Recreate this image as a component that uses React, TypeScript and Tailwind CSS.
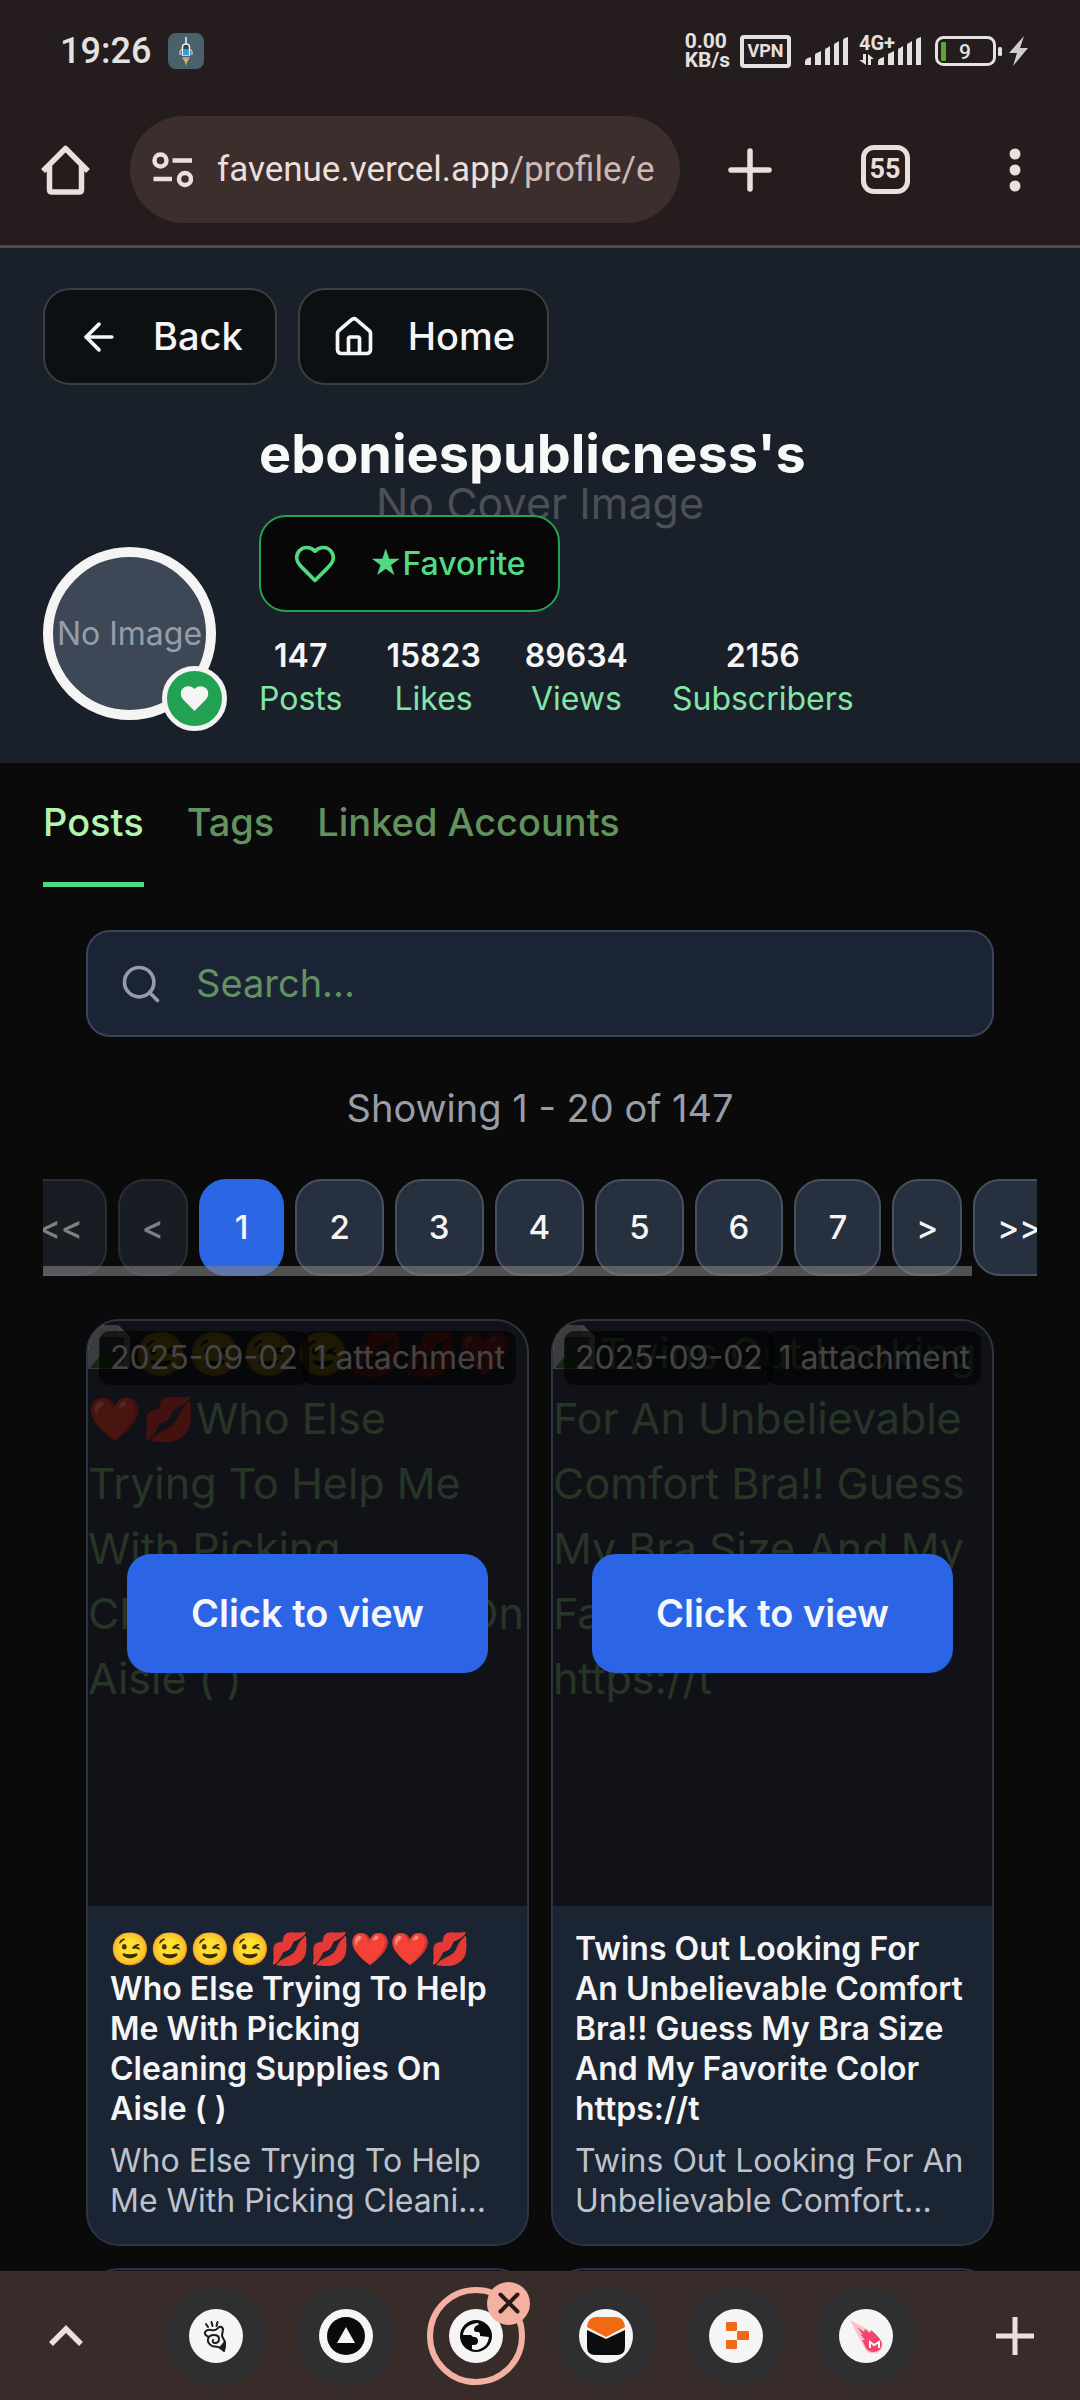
import React from "react";
import { ArrowLeft, House, Search } from "lucide-react";

const HEART =
  "M19 14c1.49-1.46 3-3.21 3-5.5A5.5 5.5 0 0 0 16.5 3c-1.76 0-3 .5-4.5 2-1.5-1.5-2.74-2-4.5-2A5.5 5.5 0 0 0 2 8.5c0 2.3 1.5 4.05 3 5.5l7 7Z";

function SignalBars() {
  return (
    <svg width="44" height="28" viewBox="0 0 44 28" fill="#e4e1e1" aria-hidden="true">
      <path d="M0 28v-3q0-3 3-4l3-1v8zM10 28V18q0-2 2-2l4-2v14zM20 28V13q0-2 2-2l3-2v19zM29 28V8q0-2 2-2l3-2v24zM38 28V3q0-1 2-2l3-1v28z" />
    </svg>
  );
}

function StatusBar() {
  return (
    <div className="flex h-[102px] items-center justify-between pl-[60px] pr-[52px] text-[#e4e1e1]">
      <div className="flex items-center gap-[17px]">
        <span className="text-[36px] font-medium leading-none">19:26</span>
        <svg width="36" height="36" viewBox="0 0 36 36" aria-hidden="true">
          <rect width="36" height="36" rx="8" fill="#4a616b" />
          <path d="M18 4v7" stroke="#f0f0f0" strokeWidth="1.5" />
          <path d="M14.5 22v-8q0-3 3.500-3t3.500 3v8z" fill="#3a4146" stroke="#f0f0f0" strokeWidth="1.500" />
          <path d="M15 16h6v6h-6z" fill="#2f9fe8" />
          <path d="M14 16l-2 2v4M22 16l2 2v4M14.500 25h7" stroke="#e8e8e8" fill="none" />
          <path d="M15 26h6l-2 3-1 4-1-4z" fill="#e8b33a" />
        </svg>
      </div>
      <div className="flex items-center">
        <div className="mr-[10px] text-[21px] font-bold leading-[19px]">
          <div>0.00</div>
          <div>KB/s</div>
        </div>
        <div className="mr-[14px] flex h-[33px] w-[51px] items-center justify-center rounded-[4px] border-4 border-[#e4e1e1] text-[18px] font-bold leading-none">
          VPN
        </div>
        <SignalBars />
        <div className="relative ml-[10px] flex items-end gap-[3px]">
          <span className="absolute -top-[4px] left-0 text-[20px] font-bold leading-[20px]">4G+</span>
          <svg width="16" height="11" viewBox="0 0 16 11" fill="#e4e1e1" aria-hidden="true">
            <path d="M4 0h3v11L0 6h4zM9 0l6 5h-3v6H9z" />
          </svg>
          <SignalBars />
        </div>
        <svg className="ml-[13px]" width="68" height="31" viewBox="0 0 68 31" aria-hidden="true">
          <rect x="1.500" y="1.500" width="58" height="27" rx="7" fill="none" stroke="#e4e1e1" strokeWidth="3" />
          <rect x="6" y="6" width="5" height="19" rx="1" fill="#57a82c" />
          <rect x="63" y="11" width="4" height="9" rx="1.500" fill="#e4e1e1" />
          <text x="30" y="23" textAnchor="middle" fill="#e4e1e1" fontSize="21" fontWeight="500">
            9
          </text>
        </svg>
        <svg className="ml-[6px]" width="19" height="30" viewBox="0 0 19 30" fill="#cfcccc" aria-hidden="true">
          <path d="M15 0 0 17h8L4 30 19 12h-8z" />
        </svg>
      </div>
    </div>
  );
}

function Toolbar() {
  return (
    <div className="flex items-center pb-[22px] pl-[41px] pt-[14px] text-[#ecdedb]">
      <button aria-label="Home page" className="mr-[40px] flex w-[49px] justify-center">
        <svg width="49" height="50" viewBox="0 0 49 50" fill="none" stroke="currentColor" strokeWidth="5.500" strokeLinejoin="round" aria-hidden="true">
          <path d="M2 26 24.500 3.500 47 26M8.500 21v23.500q0 2.500 2.500 2.500h27q2.500 0 2.500-2.500V21" />
        </svg>
      </button>
      <button aria-label="Address bar" className="flex h-[107px] min-w-0 flex-1 items-center rounded-full bg-[#3b2e2c] pl-[22px] pr-[24px] text-left">
        <svg className="mr-[24px] shrink-0" width="41" height="36" viewBox="0 0 41 36" fill="none" stroke="currentColor" strokeWidth="4.500" aria-hidden="true">
          <circle cx="8.500" cy="8.500" r="6" />
          <path d="M20.500 8.500H40M1.500 27H20" />
          <circle cx="33" cy="27" r="6" />
        </svg>
        <span className="overflow-hidden whitespace-nowrap text-[35px] leading-[50px]">
          favenue.vercel.app<span className="text-[#cdbab7]">/profile/e</span>
        </span>
      </button>
      <button aria-label="New tab" className="flex w-[140px] justify-center">
        <svg width="44" height="44" viewBox="0 0 44 44" stroke="currentColor" strokeWidth="5.500" strokeLinecap="round" aria-hidden="true">
          <path d="M22 3v38M3 22h38" />
        </svg>
      </button>
      <button aria-label="55 open tabs" className="flex w-[130px] justify-center">
        <span className="flex size-[49px] items-center justify-center rounded-[13px] border-[5px] border-[#ecdedb] text-[27px] font-bold leading-none">
          55
        </span>
      </button>
      <button aria-label="Menu" className="flex w-[130px] justify-center">
        <svg width="12" height="44" viewBox="0 0 12 44" fill="currentColor" aria-hidden="true">
          <circle cx="6" cy="6" r="5.500" />
          <circle cx="6" cy="22" r="5.500" />
          <circle cx="6" cy="38" r="5.500" />
        </svg>
      </button>
    </div>
  );
}

const stats = [
  ["147", "Posts"],
  ["15823", "Likes"],
  ["89634", "Views"],
  ["2156", "Subscribers"],
];

function ProfileHeader() {
  return (
    <section className="relative bg-[#1a2029] px-[43px] pb-[43px] pt-[40px]">
      <div className="absolute inset-0 flex items-center justify-center pb-[4px] text-[43px] text-[#4b4f56]">No Cover Image</div>
      <div className="relative flex gap-[21px]">
        <a href="#back" className="flex h-[97px] items-center gap-[32px] rounded-[27px] border-2 border-[#3b3e43] bg-[#0d1013] px-[32px] text-[38px] font-medium text-[#f5f5f5]">
          <ArrowLeft size={44} aria-hidden="true" />
          Back
        </a>
        <a href="#home" className="flex h-[97px] items-center gap-[32px] rounded-[27px] border-2 border-[#3b3e43] bg-[#0d1013] px-[32px] text-[38px] font-medium text-[#f5f5f5]">
          <House size={44} aria-hidden="true" />
          Home
        </a>
      </div>
      <div className="relative mt-[35px] flex items-end gap-[43px]">
        <div className="relative size-[173px] shrink-0">
          <div className="flex size-full items-center justify-center whitespace-nowrap rounded-full border-[10px] border-[#f4f4f4] bg-[#3d4756] text-[32px] text-[#969daa]">
            No Image
          </div>
          <span className="absolute -bottom-[11px] -right-[11px] flex size-[65px] items-center justify-center rounded-full border-[5px] border-[#f4f4f4] bg-[#22a152]">
            <svg width="33" height="33" viewBox="0 0 24 24" fill="#f4f4f4" aria-hidden="true">
              <path d={HEART} />
            </svg>
          </span>
        </div>
        <div>
          <h1 className="text-[54px] font-bold leading-[68px] text-[#f8f8f8]">eboniespublicness's</h1>
          <button className="mt-[27px] flex h-[97px] items-center gap-[32px] rounded-[27px] border-2 border-[#24a153] bg-[#070707] px-[32px] text-[32px] font-medium text-[#52da83]">
            <svg width="44" height="44" viewBox="0 0 24 24" fill="none" stroke="currentColor" strokeWidth="2" strokeLinecap="round" strokeLinejoin="round" aria-hidden="true">
              <path d={HEART} />
            </svg>
            <span>★Favorite</span>
          </button>
          <dl className="mt-[22px] flex gap-[44px] text-center text-[32px] leading-[43px]">
            {stats.map(([value, label]) => (
              <div key={label} className="flex flex-col-reverse">
                <dt className="text-[#83e6a7]">{label}</dt>
                <dd className="font-semibold text-[#f5f5f5]">{value}</dd>
              </div>
            ))}
          </dl>
        </div>
      </div>
    </section>
  );
}

function Pagination() {
  const arrow =
    "h-[97px] shrink-0 rounded-[27px] border-2 border-[#475160] bg-[#26303e] px-[22px]";
  const page =
    "h-[97px] shrink-0 rounded-[27px] border-2 border-[#475160] bg-[#26303e] px-[32px]";
  return (
    <nav aria-label="Pagination" className="relative mt-[44px] overflow-hidden">
      <div className="flex justify-center gap-[11px] text-[33px] font-medium text-[#f5f5f5]">
        <button disabled aria-label="First page" className={arrow + " opacity-50"}>{"<<"}</button>
        <button disabled aria-label="Previous page" className={arrow + " opacity-50"}>{"<"}</button>
        <button aria-current="page" className="h-[97px] shrink-0 rounded-[27px] bg-[#2b66e5] px-[36px]">1</button>
        {[2, 3, 4, 5, 6, 7].map((n) => (
          <button key={n} className={page}>{n}</button>
        ))}
        <button aria-label="Next page" className={arrow}>{">"}</button>
        <button aria-label="Last page" className={arrow}>{">>"}</button>
      </div>
      <div className="absolute bottom-0 left-0 right-[65px] h-[10px] bg-[#808080]/60" />
    </nav>
  );
}

function BrokenImage() {
  return (
    <svg className="mr-[2px] inline-block align-baseline" width="44" height="44" viewBox="0 0 44 44" aria-hidden="true">
      <path d="M0 0h30l12 12v32H0z" fill="#c5c9cf" />
      <path d="M12 12h24v26H12z" fill="#5b6370" />
      <path d="M2 43l14-17 10 8v9z" fill="#3e8a3e" />
      <path d="M30 0v12h12z" fill="#e5e7ea" />
    </svg>
  );
}

type Post = { title: string; alt: string; summary: string };

const posts: Post[] = [
  {
    title: "😉😉😉😉💋💋❤️❤️💋 Who Else Trying To Help Me With Picking Cleaning Supplies On Aisle ( )",
    alt: "😉😉😉😉💋💋❤️❤️💋Who Else\nTrying To Help Me With Picking Cleaning Supplies On Aisle ( )",
    summary: "Who Else Trying To Help Me With Picking Cleani...",
  },
  {
    title: "Twins Out Looking For An Unbelievable Comfort Bra!! Guess My Bra Size And My Favorite Color https://t",
    alt: "Twins Out Looking For An Unbelievable Comfort Bra!! Guess My Bra Size And My Favorite Color https://t",
    summary: "Twins Out Looking For An Unbelievable Comfort...",
  },
];

function PostCard({ post }: { post: Post }) {
  return (
    <article className="overflow-hidden rounded-[33px] border-2 border-[#2a3442] bg-[#1b2433]">
      <div className="relative aspect-[3/4] overflow-hidden bg-[#363f4d]">
        <p className="whitespace-pre-line text-[43px] leading-[65px] text-[#83b183]">
          <BrokenImage />
          {post.alt}
        </p>
        <div className="absolute inset-x-[11px] top-[10px] flex justify-between whitespace-nowrap text-[32px] leading-[44px] text-[#e4e4e4]">
          <span className="-mr-[12px] rounded-[11px] bg-black/60 px-[11px] py-[5px]">2025-09-02</span>
          <span className="rounded-[11px] bg-black/60 px-[11px] py-[5px]">1 attachment</span>
        </div>
        <div className="absolute inset-0 flex items-center justify-center bg-black/70">
          <button className="h-[119px] rounded-[24px] bg-[#2b65e5] px-[64px] text-[38px] font-semibold text-[#f3f6fd]">
            Click to view
          </button>
        </div>
      </div>
      <div className="px-[22px] py-[23px] text-[32px] leading-[40px]">
        <h2 className="font-semibold text-[#f5f5f6]">{post.title}</h2>
        <p className="mt-[12px] text-[#bec3cb]">{post.summary}</p>
      </div>
    </article>
  );
}

const tabIcons: { name: string; icon: React.ReactNode }[] = [
  {
    name: "Hand site",
    icon: (
      <g fill="none" stroke="#1c1c1c" strokeWidth="2" strokeLinecap="round" strokeLinejoin="round">
        <path d="M17 15l2 3M22.500 13l1 4M28.500 13l-1 4" />
        <path d="M20 28q-5-2-4-5 2-3 6-2 5 1 8-3 3-1 4 2l-1 7 3 6-1 8q-3-3-6-3l-6-1q-5-3-4-7 1-4 6-4 5 0 5 4 0 4-4 4-3 0-2-3" />
        <path d="M31 39l5-6v4l-1 5z" fill="#1c1c1c" />
      </g>
    ),
  },
  {
    name: "Triangle site",
    icon: (
      <g>
        <circle cx="27" cy="27" r="19" fill="#0a0a0a" />
        <path d="M27 18l9 16H18z" fill="#f5f5f5" />
      </g>
    ),
  },
  {
    name: "Current page",
    icon: (
      <g>
        <circle cx="27" cy="27" r="16" fill="#0a0a0a" />
        <path d="M14 26q1-10 14-12 3 0 1 2-4 1-4 5 0 2 4 2 2 0 2 2v2l9 1q-1 9-9 12-4 2-8 0v-4h2q4 0 4-4t-4-4q-2 0-3-2z" fill="#f5f5f5" />
      </g>
    ),
  },
  {
    name: "Envelope site",
    icon: (
      <g>
        <path d="M8 18q1-10 9-10h20q8 0 9 10L27 28z" fill="#f06a14" />
        <path d="M8 21l19 9 19-9v17q0 8-8 8H16q-8 0-8-8z" fill="#0d0d0d" />
      </g>
    ),
  },
  {
    name: "Blocks site",
    icon: (
      <g fill="#ee6a19">
        <rect x="17" y="13" width="11" height="9" rx="1" />
        <rect x="28" y="22" width="12" height="9" rx="1" />
        <rect x="17" y="31" width="11" height="9" rx="1" />
      </g>
    ),
  },
  {
    name: "Comet site",
    icon: (
      <g>
        <path d="M11 11l17 9 14 11q4 9-4 13-8 2-12-4l-7-13z" fill="#f7c3cd" />
        <path d="M18 18l7 5 1-3 5 4 1-3q10 8 11 14-1 8-9 8-6 0-9-8l-2-4h3l-5-6 3 1z" fill="#f2456b" />
        <path d="M31 39v-6l4 3 5-3v6" fill="none" stroke="#fff" strokeWidth="2" />
      </g>
    ),
  },
];

function TabStrip() {
  return (
    <div className="flex h-[129px] shrink-0 items-center justify-between bg-[#382c2b] text-[#efdfdc]">
      <button aria-label="Expand tabs" className="flex w-[132px] justify-center">
        <svg width="34" height="22" viewBox="0 0 34 22" fill="none" stroke="currentColor" strokeWidth="5.500" aria-hidden="true">
          <path d="M2 19 17 4l15 15" />
        </svg>
      </button>
      <div className="flex">
        {tabIcons.map((tab, i) => {
          const active = i === 2;
          return (
            <div key={tab.name} className="relative flex w-[130px] justify-center">
              <button
                aria-label={tab.name}
                className={
                  active
                    ? "flex size-[98px] items-center justify-center rounded-full border-[6px] border-[#f4b1a1]"
                    : "flex size-[98px] items-center justify-center rounded-full bg-[#2e2f31]"
                }
              >
                <svg width="54" height="54" viewBox="0 0 54 54" aria-hidden="true">
                  <circle cx="27" cy="27" r="27" fill="#f5f5f5" />
                  {tab.icon}
                </svg>
              </button>
              {active && (
                <button aria-label="Close tab" className="absolute -top-[5px] right-[11px] flex size-[43px] items-center justify-center rounded-full bg-[#f4b1a1]">
                  <svg width="22" height="22" viewBox="0 0 22 22" stroke="#2a1a17" strokeWidth="4" strokeLinecap="round" aria-hidden="true">
                    <path d="M2.500 2.500l17 17M19.500 2.500l-17 17" />
                  </svg>
                </button>
              )}
            </div>
          );
        })}
      </div>
      <button aria-label="Add tab" className="flex w-[130px] justify-center">
        <svg width="38" height="38" viewBox="0 0 38 38" stroke="currentColor" strokeWidth="5" aria-hidden="true">
          <path d="M19 0v38M0 19h38" />
        </svg>
      </button>
    </div>
  );
}

export default function App() {
  return (
    <div className="flex h-screen flex-col bg-[#0a0a0a]">
      <header className="shrink-0 border-b-[3px] border-[#574747] bg-[#241c1d] font-['Roboto',sans-serif]">
        <StatusBar />
        <Toolbar />
      </header>
      <main className="min-h-0 flex-1 overflow-y-auto font-['Inter',sans-serif] [scrollbar-width:none]">
        <ProfileHeader />
        <div className="px-[43px] pt-[32px]">
          <div role="tablist" className="flex gap-[43px] text-[38px] font-medium leading-[54px]">
            <button role="tab" aria-selected="true" className="border-b-[5px] border-[#4fd880] pb-[33px] text-[#b3f5ae]">Posts</button>
            <button role="tab" aria-selected="false" className="border-b-[5px] border-transparent pb-[33px] text-[#62925f]">Tags</button>
            <button role="tab" aria-selected="false" className="border-b-[5px] border-transparent pb-[33px] text-[#62925f]">Linked Accounts</button>
          </div>
          <label className="mx-[43px] mt-[43px] flex h-[107px] items-center gap-[33px] rounded-[24px] border-2 border-[#38455a] bg-[#1b2434] px-[31px]">
            <Search size={44} color="#969ba8" aria-hidden="true" className="shrink-0" />
            <input
              type="search"
              aria-label="Search posts"
              placeholder="Search..."
              className="min-w-0 flex-1 bg-transparent text-[38px] text-[#b3f5ae] outline-none placeholder:text-[#62925f]"
            />
          </label>
          <p className="mt-[44px] text-center text-[38px] leading-[54px] text-[#989ea9]">Showing 1 - 20 of 147</p>
          <Pagination />
          <div className="mx-[43px] mt-[43px] grid grid-cols-2 gap-[22px]">
            {posts.map((post) => (
              <PostCard key={post.title} post={post} />
            ))}
            <div className="h-[160px] rounded-[33px] border-2 border-[#2a3442] bg-[#101319]" />
            <div className="h-[160px] rounded-[33px] border-2 border-[#2a3442] bg-[#101319]" />
          </div>
        </div>
      </main>
      <TabStrip />
    </div>
  );
}
